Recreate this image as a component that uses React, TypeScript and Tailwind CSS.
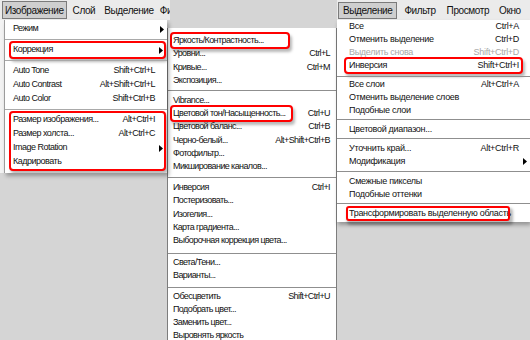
import React from "react";

const Arrow = () => (
  <svg width="4" height="7" viewBox="0 0 4 7" className="shrink-0">
    <path d="M0 0 L4 3.5 L0 7 Z" fill="#000" />
  </svg>
);

type It = { l: string; s?: string; a?: boolean; d?: boolean };

function Row({ it, cls }: { it: It; cls: string }) {
  return (
    <div className={`flex items-center justify-between whitespace-nowrap ${cls}`}>
      <span className={it.d ? "text-[#a8a8a8]" : "text-[#111]"}>{it.l}</span>
      {it.s ? <span className={it.d ? "text-[#a8a8a8]" : "text-[#111]"}>{it.s}</span> : null}
      {it.a ? <Arrow /> : null}
    </div>
  );
}

const SepL = () => (
  <div className="h-[7px] flex items-center">
    <div className="h-px w-full bg-[#a9a9a9]" />
  </div>
);

const redBox =
  "outline-2 outline-[#ff0000] rounded-[2px] shadow-[2px_3px_3px_2px_rgba(0,0,0,0.28)]";

export default function App() {
  return (
    <div
      className="w-[530px] h-[340px] flex overflow-hidden bg-[#d5d5d5]"
      style={{ fontFamily: '"Liberation Sans", Arial, sans-serif' }}
    >
      {/* LEFT PANEL */}
      <div className="w-[167px] shrink-0 flex flex-col relative z-10">
        <div className="h-[20px] w-[170px] bg-[#ebebeb] flex items-center text-[10px] tracking-[-0.4px] text-[#111] whitespace-nowrap overflow-hidden">
          <div className="ml-[2px] h-[18px] px-[2px] flex items-center border border-[#7b7b7b] bg-[#cfcfcf]">
            Изображение
          </div>
          <span className="ml-[6px]">Слой</span>
          <span className="ml-[9px]">Выделение</span>
          <span className="ml-[6px]">Фильтр</span>
        </div>
        <div className="flex">
          <div className="w-[4px] h-[153px] bg-[#f3f3f3]" />
          <div className="w-[163px] h-[153px] overflow-hidden bg-white border-l border-[#9c9c9c] shadow-[2px_3px_4px_rgba(0,0,0,0.3)] pt-[2px] text-[9px] tracking-[-0.5px]">
            <Row it={{ l: "Режим", a: true }} cls="h-[14px] pl-[8px] pr-[3px]" />
            <SepL />
            <div className={`ml-[6px] mr-[3px] ${redBox}`}>
              <Row it={{ l: "Коррекция", a: true }} cls="h-[14px] pl-[2px] pr-[1px]" />
            </div>
            <SepL />
            <Row it={{ l: "Auto Tone", s: "Shift+Ctrl+L" }} cls="h-[14px] pl-[8px] pr-[12px]" />
            <Row it={{ l: "Auto Contrast", s: "Alt+Shift+Ctrl+L" }} cls="h-[14px] pl-[8px] pr-[12px]" />
            <Row it={{ l: "Auto Color", s: "Shift+Ctrl+B" }} cls="h-[14px] pl-[8px] pr-[12px]" />
            <SepL />
            <div className={`ml-[6px] mr-[3px] ${redBox}`}>
              <Row it={{ l: "Размер изображения...", s: "Alt+Ctrl+I" }} cls="h-[14px] pl-[2px] pr-[9px]" />
              <Row it={{ l: "Размер холста...", s: "Alt+Ctrl+C" }} cls="h-[14px] pl-[2px] pr-[9px]" />
              <Row it={{ l: "Image Rotation", a: true }} cls="h-[14px] pl-[2px] pr-[1px]" />
              <Row it={{ l: "Кадрировать" }} cls="h-[14px] pl-[2px] pr-[9px]" />
            </div>
            <Row it={{ l: "Тримминг..." }} cls="h-[14px] pl-[8px] pr-[12px] mt-[2px]" />
          </div>
        </div>
      </div>

      {/* MIDDLE PANEL */}
      <div className="w-[170px] shrink-0 flex flex-col">
        <div className="h-[28px] shrink-0" />
        <div className="flex-1 bg-white border-l border-r border-[#7d7d7d] pt-[6px] text-[9px] tracking-[-0.6px]">
          <div className="h-[13.4px] flex items-center pl-[4px]">
            <div className={`h-full w-[116px] pl-[1px] flex items-center text-[#111] whitespace-nowrap ${redBox}`}>
              Яркость/Контрастность...
            </div>
          </div>
          <Row it={{ l: "Уровни...", s: "Ctrl+L" }} cls="h-[13.4px] pl-[5px] pr-[6px]" />
          <Row it={{ l: "Кривые...", s: "Ctrl+M" }} cls="h-[13.4px] pl-[5px] pr-[6px]" />
          <Row it={{ l: "Экспозиция..." }} cls="h-[13.4px] pl-[5px] pr-[6px]" />
          <div className="h-[6px] pt-[2px]">
            <div className="h-px w-full bg-[#8f8f8f]" />
          </div>
          <Row it={{ l: "Vibrance..." }} cls="h-[13.4px] pl-[5px] pr-[6px]" />
          <div className="h-[13.4px] flex items-center justify-between pl-[4px] pr-[6px]">
            <div className={`h-full w-[119px] pl-[1px] flex items-center text-[#111] whitespace-nowrap ${redBox}`}>
              Цветовой тон/Насыщенность...
            </div>
            <span className="text-[#111]">Ctrl+U</span>
          </div>
          <Row it={{ l: "Цветовой баланс...", s: "Ctrl+B" }} cls="h-[13.4px] pl-[5px] pr-[6px]" />
          <Row it={{ l: "Черно-белый...", s: "Alt+Shift+Ctrl+B" }} cls="h-[13.4px] pl-[5px] pr-[6px]" />
          <Row it={{ l: "Фотофильтр..." }} cls="h-[13.4px] pl-[5px] pr-[6px]" />
          <Row it={{ l: "Микширование каналов..." }} cls="h-[13.4px] pl-[5px] pr-[6px]" />
          <div className="h-[7px] pt-[3px]">
            <div className="h-px w-full bg-[#8f8f8f]" />
          </div>
          <Row it={{ l: "Инверсия", s: "Ctrl+I" }} cls="h-[13.4px] pl-[5px] pr-[6px]" />
          <Row it={{ l: "Постеризовать..." }} cls="h-[13.4px] pl-[5px] pr-[6px]" />
          <Row it={{ l: "Изогелия..." }} cls="h-[13.4px] pl-[5px] pr-[6px]" />
          <Row it={{ l: "Карта градиента..." }} cls="h-[13.4px] pl-[5px] pr-[6px]" />
          <Row it={{ l: "Выборочная коррекция цвета..." }} cls="h-[13.4px] pl-[5px] pr-[6px]" />
          <div className="h-[8px] pt-[5px]">
            <div className="h-px w-full bg-[#8f8f8f]" />
          </div>
          <Row it={{ l: "Света/Тени..." }} cls="h-[13.4px] pl-[5px] pr-[6px]" />
          <Row it={{ l: "Варианты..." }} cls="h-[13.4px] pl-[5px] pr-[6px]" />
          <div className="h-[7.5px] pt-[4px]">
            <div className="h-px w-full bg-[#8f8f8f]" />
          </div>
          <Row it={{ l: "Обесцветить", s: "Shift+Ctrl+U" }} cls="h-[13px] pl-[5px] pr-[6px]" />
          <Row it={{ l: "Подобрать цвет..." }} cls="h-[13px] pl-[5px] pr-[6px]" />
          <Row it={{ l: "Заменить цвет..." }} cls="h-[13px] pl-[5px] pr-[6px]" />
          <Row it={{ l: "Выровнять яркость" }} cls="h-[13px] pl-[5px] pr-[6px]" />
        </div>
      </div>

      {/* RIGHT PANEL */}
      <div className="w-[193px] shrink-0 flex flex-col">
        <div className="h-[20px] bg-[#ebebeb] flex items-center text-[10px] tracking-[-0.4px] text-[#111] whitespace-nowrap overflow-hidden">
          <div className="ml-[1px] h-[17px] px-[4px] flex items-center border border-[#7b7b7b] bg-[#cfcfcf]">
            Выделение
          </div>
          <span className="ml-[7px]">Фильтр</span>
          <span className="ml-[11px]">Просмотр</span>
          <span className="ml-[10px]">Окно</span>
        </div>
        <div className="h-[202px] bg-white shadow-[1px_3px_4px_rgba(0,0,0,0.3)] text-[9px] tracking-[-0.3px]">
          <Row it={{ l: "Все", s: "Ctrl+A" }} cls="h-[13px] pl-[12px] pr-[11px]" />
          <Row it={{ l: "Отменить выделение", s: "Ctrl+D" }} cls="h-[13px] pl-[12px] pr-[11px]" />
          <Row it={{ l: "Выделить снова", s: "Shift+Ctrl+D", d: true }} cls="h-[13px] pl-[12px] pr-[11px]" />
          <div className={`ml-[9px] mr-[9px] ${redBox}`}>
            <Row it={{ l: "Инверсия", s: "Shift+Ctrl+I" }} cls="h-[13px] pl-[3px] pr-[2px]" />
          </div>
          <div className="h-[6px] pt-[4px]">
            <div className="h-px w-full bg-[#8f8f8f]" />
          </div>
          <Row it={{ l: "Все слои", s: "Alt+Ctrl+A" }} cls="h-[13px] pl-[12px] pr-[11px]" />
          <Row it={{ l: "Отменить выделение слоев" }} cls="h-[13px] pl-[12px] pr-[11px]" />
          <Row it={{ l: "Подобные слои" }} cls="h-[13px] pl-[12px] pr-[11px]" />
          <div className="h-[6px] pt-[2px]">
            <div className="h-px w-full bg-[#8f8f8f]" />
          </div>
          <Row it={{ l: "Цветовой диапазон..." }} cls="h-[13px] pl-[12px] pr-[11px]" />
          <div className="h-[6px] pt-[2px]">
            <div className="h-px w-full bg-[#8f8f8f]" />
          </div>
          <Row it={{ l: "Уточнить край...", s: "Alt+Ctrl+R" }} cls="h-[13px] pl-[12px] pr-[11px]" />
          <Row it={{ l: "Модификация", a: true }} cls="h-[13px] pl-[12px] pr-[3px]" />
          <div className="h-[7px] pt-[3px]">
            <div className="h-px w-full bg-[#8f8f8f]" />
          </div>
          <Row it={{ l: "Смежные пикселы" }} cls="h-[13px] pl-[12px] pr-[11px]" />
          <Row it={{ l: "Подобные оттенки" }} cls="h-[13px] pl-[12px] pr-[11px]" />
          <div className="h-[6px] pt-[2px]">
            <div className="h-px w-full bg-[#8f8f8f]" />
          </div>
          <div className={`ml-[10px] w-[162px] outline-offset-[-1px] ${redBox}`}>
            <Row it={{ l: "Трансформировать выделенную область" }} cls="h-[13px] pl-[2px]" />
          </div>
        </div>
      </div>
    </div>
  );
}
